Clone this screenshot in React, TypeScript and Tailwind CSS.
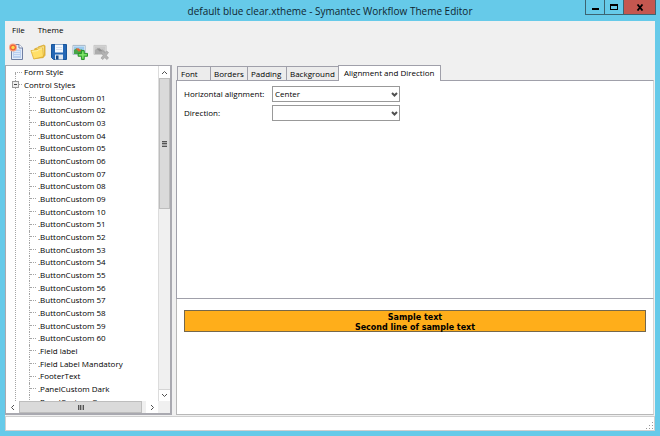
import React, { useState } from "react";

const styleNames: string[] = [
  ".ButtonCustom 01",
  ".ButtonCustom 02",
  ".ButtonCustom 03",
  ".ButtonCustom 04",
  ".ButtonCustom 05",
  ".ButtonCustom 06",
  ".ButtonCustom 07",
  ".ButtonCustom 08",
  ".ButtonCustom 09",
  ".ButtonCustom 10",
  ".ButtonCustom 51",
  ".ButtonCustom 52",
  ".ButtonCustom 53",
  ".ButtonCustom 54",
  ".ButtonCustom 55",
  ".ButtonCustom 56",
  ".ButtonCustom 57",
  ".ButtonCustom 58",
  ".ButtonCustom 59",
  ".ButtonCustom 60",
  ".Field label",
  ".Field Label Mandatory",
  ".FooterText",
  ".PanelCustom Dark",
  ".PanelCustom Gray",
];

function NewIcon() {
  return (
    <svg viewBox="0 0 16 18" className="h-[18px] w-4" aria-hidden="true">
      <path d="M2.500 1.500H10l3.500 3.500v11.500H2.500z" fill="#e4edfa" stroke="#6f7fa3" />
      <path d="M10 1.500V5h3.500" fill="#fff" stroke="#6f7fa3" />
      <path d="M4 6.500h8v8.500H4z" fill="#b9cff0" />
      <path d="M5 8.500h6M5 10.500h6M5 12.500h6" stroke="#dce8fa" />
      <circle cx="4" cy="4.500" r="4" fill="#f8a78a" />
      <circle cx="4" cy="4.500" r="3" fill="#ee6238" />
      <circle cx="4" cy="4.500" r="1.700" fill="#ffd94a" />
    </svg>
  );
}

function OpenIcon() {
  return (
    <svg viewBox="0 0 17 18" className="h-[18px] w-4" aria-hidden="true">
      <path d="M5 5.500l3-1 1-1 6-2 1 1v10l-2 2.500-9 1z" fill="#e9bd3a" stroke="#cfa02c" strokeWidth=".7" />
      <path d="M8 5l6.500-2v9L8 14z" fill="#fff7c8" />
      <path d="M1 7.500l7-.8 1.200-1.500 4.300-.7.800 9.500-10.300 2.500z" fill="#ffdf68" stroke="#dba92b" strokeWidth=".8" />
      <path d="M2 8.300l6.500-.8 1.200-1.500 3-.4" fill="none" stroke="#fff3ad" />
    </svg>
  );
}

function SaveIcon() {
  return (
    <svg viewBox="0 0 16 18" className="h-[18px] w-4" aria-hidden="true">
      <path d="M.5 1.500h15v15h-13l-2-2z" fill="#2467b5" stroke="#18559b" />
      <path d="M4 1.500h8v8H4z" fill="#f4f8fd" />
      <path d="M5 4.500h6M5 6.500h6" stroke="#d5e1ef" />
      <path d="M4 11.500h8v5H4z" fill="#e0e8f1" />
      <path d="M5 12.500h2.500v4H5z" fill="#174c8b" />
    </svg>
  );
}

function ImageAddIcon() {
  return (
    <svg viewBox="0 0 17 18" className="h-[18px] w-4" aria-hidden="true">
      <path d="M1 2h13v9.500H1z" fill="#f8fbff" stroke="#9fb3c5" />
      <path d="M2 3h11v4H2z" fill="#9bc9ee" />
      <path d="M2 7l3-2 3 2 2-1 3 2v3H2z" fill="#48a447" />
      <path d="M4 5.500l3-.5 3 3-3 .5z" fill="#df6533" />
      <path d="M10 7.500h3v3h3.500v3H13v3.500h-3v-3.500H6.500v-3H10z" fill="#58cf48" stroke="#238d26" />
      <path d="M11.500 8.500v7M7.500 12h8" stroke="#8be873" />
    </svg>
  );
}

function ImageRemoveIcon() {
  return (
    <svg viewBox="0 0 17 18" className="h-[18px] w-4" aria-hidden="true">
      <path d="M1 2h13v9.500H1z" fill="#dedede" stroke="#c5c5c5" />
      <path d="M2 3h11v4H2z" fill="#c9c9c9" />
      <path d="M2 7l3-2 3 2 2-1 3 2v3H2z" fill="#acacac" />
      <path d="M4 5.500l3-.5 3 3-3 .5z" fill="#919191" />
      <path
        d="M8.500 9.500l2-1.500 2 2.200L14.500 8l2 1.500-2.300 3 2.300 3-2 1.500-2-2.200-2 2.200-2-1.500 2.300-3z"
        fill="#b3b3b3"
        stroke="#a0a0a0"
        strokeWidth=".7"
      />
    </svg>
  );
}

function Chevron({ className, width = 1 }: { className?: string; width?: number }) {
  return (
    <svg viewBox="0 0 7 5" className={`h-[5px] w-[7px] ${className ?? ""}`} aria-hidden="true">
      <path d="M1 1l2.500 2.500L6 1" fill="none" stroke="#505050" strokeWidth={width} />
    </svg>
  );
}

const tools = [
  { label: "New theme", icon: <NewIcon /> },
  { label: "Open theme", icon: <OpenIcon /> },
  { label: "Save theme", icon: <SaveIcon /> },
  { label: "Add image", icon: <ImageAddIcon /> },
  { label: "Remove image", icon: <ImageRemoveIcon />, disabled: true },
];

const tabs = [
  { name: "Font", width: "w-[33px]" },
  { name: "Borders", width: "w-[37px]" },
  { name: "Padding", width: "w-[39px]" },
  { name: "Background", width: "w-[52px]" },
  { name: "Alignment and Direction", width: "w-[103px]" },
];

function TitleBar() {
  return (
    <header className="relative flex h-[21px] shrink-0 items-center justify-center text-[10px] text-[#102630]">
      <h1>default blue clear.xtheme - Symantec Workflow Theme Editor</h1>
      <div className="absolute top-0 -right-px flex h-[15px] border-x border-b border-[#3c6472]">
        <button aria-label="Minimize" className="flex w-[19px] items-center justify-center border-r border-[#3c6472]">
          <span className="mt-1 h-[2px] w-[7px] bg-black" />
        </button>
        <button aria-label="Maximize" className="flex w-[19px] items-center justify-center border-r border-[#3c6472]">
          <span className="h-[6px] w-[8px] border border-t-2 border-black" />
        </button>
        <button aria-label="Close" className="flex w-[31px] items-center justify-center bg-[#c4574f]">
          <svg viewBox="0 0 8 7" className="h-[7px] w-2" aria-hidden="true">
            <path d="M1.500.5l5 6M6.500.5l-5 6" stroke="#000" strokeWidth="1.800" />
          </svg>
        </button>
      </div>
    </header>
  );
}

function StyleTree() {
  const [open, setOpen] = useState(true);
  return (
    <div className="relative min-h-0 flex-1 overflow-hidden pl-px">
      <div className="absolute top-[7px] bottom-0 left-[9px] border-l border-dotted border-[#a5a5a5]" />
      <ul className="grid h-[342px] auto-rows-fr">
        <li className="flex items-center pl-2">
          <span className="w-[7px] border-t border-dotted border-[#a5a5a5]" />
          <span className="pl-[2px]">Form Style</span>
        </li>
        <li className="relative flex items-center pl-[5px]">
          <button
            aria-label="Toggle Control Styles"
            aria-expanded={open}
            onClick={() => setOpen(!open)}
            className="flex size-[7px] items-center justify-center border border-[#999] bg-[#eee]"
          >
            <span className="h-px w-[3px] bg-[#444]" />
          </button>
          <span className="w-[3px] border-t border-dotted border-[#a5a5a5]" />
          <span className="pl-[2px]">Control Styles</span>
        </li>
        {open &&
          styleNames.map((name) => (
            <li key={name} className="ml-[22px] flex items-center border-l border-dotted border-[#a5a5a5]">
              <span className="w-[6px] border-t border-dotted border-[#a5a5a5]" />
              <span className="pl-[2px] whitespace-nowrap">{name}</span>
            </li>
          ))}
      </ul>
    </div>
  );
}

function StylePanel() {
  return (
    <aside className="flex w-[167px] shrink-0 flex-col border border-r-2 border-b-2 border-[#a9a9b0] bg-white">
      <div className="flex min-h-0 flex-1">
        <div className="flex min-w-0 flex-1 flex-col">
          <StyleTree />
        </div>
        <div className="flex w-3 flex-col border-l border-[#dcdcdc] bg-[#f0f0f0]">
          <button aria-label="Scroll up" className="flex h-3 items-center justify-center bg-white">
            <Chevron className="rotate-180" />
          </button>
          <div className="flex h-[131px] flex-col items-center justify-center border border-[#bdbdbd] bg-[#dadada]">
            <span className="flex h-[6px] w-[5px] flex-col justify-between bg-[#aaa]">
              <span className="h-px bg-[#555]" />
              <span className="h-px bg-[#555]" />
              <span className="h-px bg-[#555]" />
            </span>
          </div>
          <div className="flex-1" />
          <button aria-label="Scroll down" className="flex h-3 items-center justify-center border-t border-[#d5d5d5] bg-white">
            <Chevron />
          </button>
        </div>
      </div>
      <div className="flex h-3 bg-[#f0f0f0]">
        <button aria-label="Scroll left" className="flex w-[13px] items-center justify-center bg-white">
          <Chevron className="rotate-90" />
        </button>
        <div className="flex w-[123px] items-center justify-center border border-[#bdbdbd] bg-[#dadada]">
          <span className="flex h-[5px] w-[6px] justify-between bg-[#aaa]">
            <span className="w-px bg-[#555]" />
            <span className="w-px bg-[#555]" />
            <span className="w-px bg-[#555]" />
          </span>
        </div>
        <div className="flex-1" />
        <button aria-label="Scroll right" className="mr-3 flex w-3 items-center justify-center bg-white">
          <Chevron className="-rotate-90" />
        </button>
      </div>
    </aside>
  );
}

function SelectField({ id, label, options, value }: { id: string; label: string; options: string[]; value: string }) {
  return (
    <div className="flex items-center">
      <label htmlFor={id} className="w-[88px] whitespace-nowrap">
        {label}
      </label>
      <div className="relative w-32">
        <select
          id={id}
          defaultValue={value}
          className="block h-4 w-full appearance-none border border-[#999] bg-white pl-[2px] leading-[14px]"
        >
          {options.map((option) => (
            <option key={option}>{option}</option>
          ))}
        </select>
        <Chevron className="pointer-events-none absolute top-[6px] right-[2px]" width={2} />
      </div>
    </div>
  );
}

function Editor() {
  const [active, setActive] = useState("Alignment and Direction");
  return (
    <main className="ml-1 flex min-w-0 flex-1 flex-col">
      <div role="tablist" className="flex h-[15px] shrink-0 items-end pl-px">
        {tabs.map((tab) => (
          <button
            key={tab.name}
            role="tab"
            aria-selected={tab.name === active}
            onClick={() => setActive(tab.name)}
            className={`${tab.width} border-t border-l border-[#a0a0aa] text-left whitespace-nowrap last:border-r ${
              tab.name === active ? "z-10 -mb-px h-4 bg-white pb-[2px] pl-[5px]" : "h-[14px] bg-[#ececec] pl-[3px]"
            }`}
          >
            {tab.name}
          </button>
        ))}
      </div>
      <section className="flex flex-1 flex-col gap-[3px] border border-[#a0a0aa] border-r-[#d5d5d5] bg-white pt-[5px] pl-[7px]">
        <SelectField id="horizontal" label="Horizontal alignment:" options={["Left", "Center", "Right"]} value="Center" />
        <SelectField id="direction" label="Direction:" options={["", "Left to right", "Right to left"]} value="" />
      </section>
      <section className="h-[116px] shrink-0 border-x border-b border-[#b8b8b8] border-r-[#d5d5d5] bg-white px-[7px] pt-[11px]">
        <div className="h-[22px] border border-[#75684c] bg-[#ffae1a] pt-[2px] text-center font-['DejaVu_Sans',sans-serif] text-[8px] leading-[10px] font-bold text-black">
          <p>Sample text</p>
          <p>Second line of sample text</p>
        </div>
      </section>
    </main>
  );
}

export default function App() {
  return (
    <div className="flex h-screen flex-col bg-[#66cae9] px-[5px] pb-[5px] font-['Open_Sans',sans-serif] text-[8px] leading-3 text-black">
      <TitleBar />
      <div className="flex min-h-0 flex-1 flex-col bg-[#f0f0f0]">
        <nav className="flex h-[17px] shrink-0 items-center gap-[13px] pl-[7px]">
          <button>File</button>
          <button>Theme</button>
        </nav>
        <div className="flex h-[27px] shrink-0 items-center gap-[5px] pl-1">
          {tools.map((tool) => (
            <button key={tool.label} aria-label={tool.label} disabled={tool.disabled}>
              {tool.icon}
            </button>
          ))}
        </div>
        <div className="flex min-h-0 flex-1 pr-px">
          <StylePanel />
          <Editor />
        </div>
        <footer className="mt-px flex h-[15px] shrink-0 items-end justify-end border border-[#cfcfcf] bg-white">
          <svg viewBox="0 0 8 8" className="h-2 w-2" aria-hidden="true">
            <path
              d="M6 0h1v1H6zM6 3h1v1H6zM3 3h1v1H3zM6 6h1v1H6zM3 6h1v1H3zM0 6h1v1H0z"
              fill="#999"
            />
          </svg>
        </footer>
      </div>
    </div>
  );
}
